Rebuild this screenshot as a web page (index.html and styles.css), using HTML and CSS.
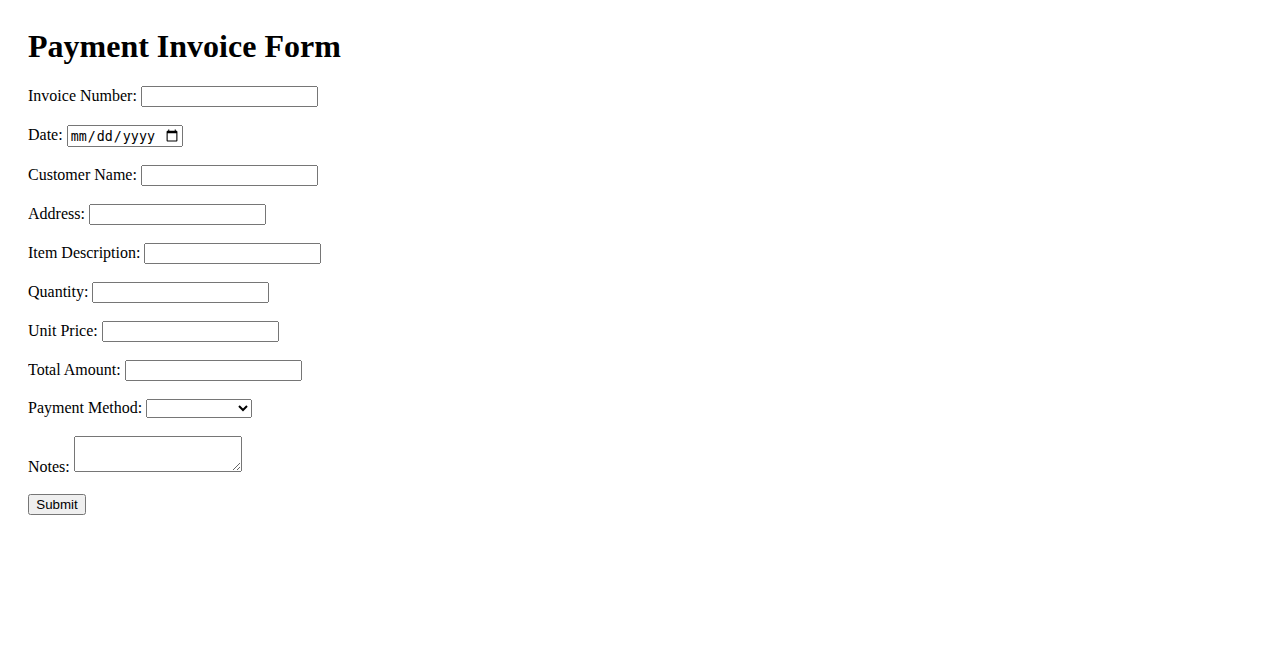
FILE: index.html
```html
<!DOCTYPE html>
<html>
<head>
<meta charset="utf-8">
<title>Payment Invoice Form</title>
<link rel="stylesheet" href="styles.css">
</head>
<body class="page">
<h1 class="title">Payment Invoice Form</h1>
<form class="invoice-form">
<label for="inv">Invoice Number:</label> <input class="field" type="text" id="inv"><br><br>
<label for="date">Date:</label> <input class="date" type="date" id="date"><br><br>
<label for="cust">Customer Name:</label> <input class="field" type="text" id="cust"><br><br>
<label for="addr">Address:</label> <input class="field" type="text" id="addr"><br><br>
<label for="item">Item Description:</label> <input class="field" type="text" id="item"><br><br>
<label for="qty">Quantity:</label> <input class="field" type="number" id="qty"><br><br>
<label for="price">Unit Price:</label> <input class="field" type="number" id="price"><br><br>
<label for="total">Total Amount:</label> <input class="field" type="number" id="total"><br><br>
<label for="pm">Payment Method:</label> <select id="pm" class="method"><option></option><option>Credit Card</option><option>Bank Transfer</option><option>Cash</option></select><br><br>
<label for="notes">Notes:</label> <textarea class="notes" id="notes"></textarea><br><br>
<input class="submit" type="submit" value="Submit">
</form>
</body>
</html>
```
FILE: styles.css
```css
.page {
  margin: 28px;
  font-family: "Liberation Serif", "Times New Roman", serif;
}
.title {
  margin-top: 0;
}
.field {
  box-sizing: border-box;
  width: 177px;
}
.date {
  box-sizing: border-box;
  width: 116px;
}
.method {
  width: 106px;
}
.notes {
  box-sizing: border-box;
  width: 168px;
  height: 36px;
}
.submit {
  width: 58px;
}
```
